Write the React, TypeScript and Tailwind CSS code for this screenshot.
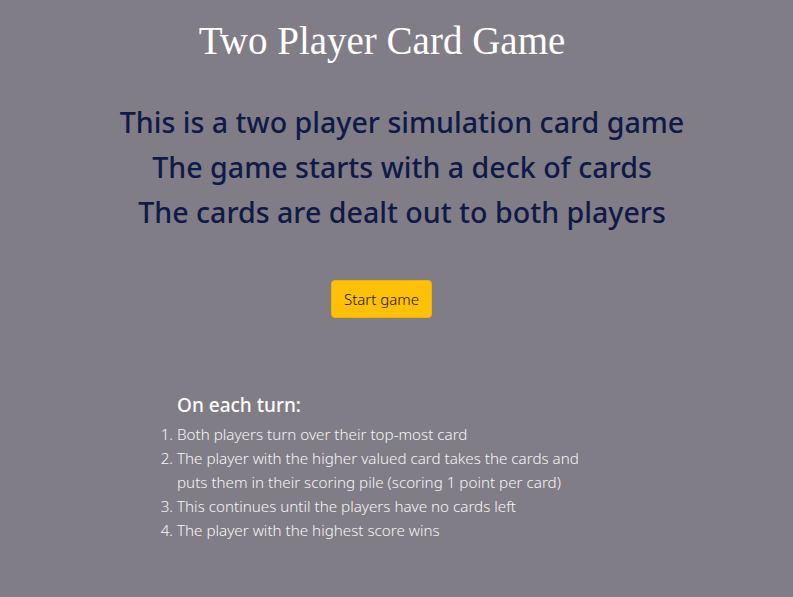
export default function App() {
  return (
    <div className="min-h-screen w-full bg-[#817d86] pt-[17px]">
      <h1 className="pr-[29px] text-center font-['Liberation_Serif',serif] text-[39px] leading-[48px] font-normal text-white">
        Two Player Card Game
      </h1>

      <div className="mt-[34px] pl-[11px] text-center font-['Noto_Sans',sans-serif] text-[28.6px] leading-[45px] font-medium text-[#0f1a47]">
        <p>This is a two player simulation card game</p>
        <p>The game starts with a deck of cards</p>
        <p>The cards are dealt out to both players</p>
      </div>

      <div className="mt-[46px] flex justify-center pr-[30px]">
        <button className="h-[38px] w-[101px] rounded border border-[#f0b400] bg-[#ffc107] font-['Noto_Sans',sans-serif] text-[15px] font-light text-[#111]">
          Start game
        </button>
      </div>

      <div className="mt-[74px] pl-[177px] font-['Noto_Sans',sans-serif] text-white">
        <h3 className="text-[19px] leading-[26px] font-medium">On each turn:</h3>
        <ol className="mt-[4px] w-[412px] list-decimal text-[15.2px] leading-[24px] font-light text-[#f5f5f5]">
          <li>Both players turn over their top-most card</li>
          <li>The player with the higher valued card takes the cards and puts them in their scoring pile (scoring 1 point per card)</li>
          <li>This continues until the players have no cards left</li>
          <li>The player with the highest score wins</li>
        </ol>
      </div>
    </div>
  );
}
